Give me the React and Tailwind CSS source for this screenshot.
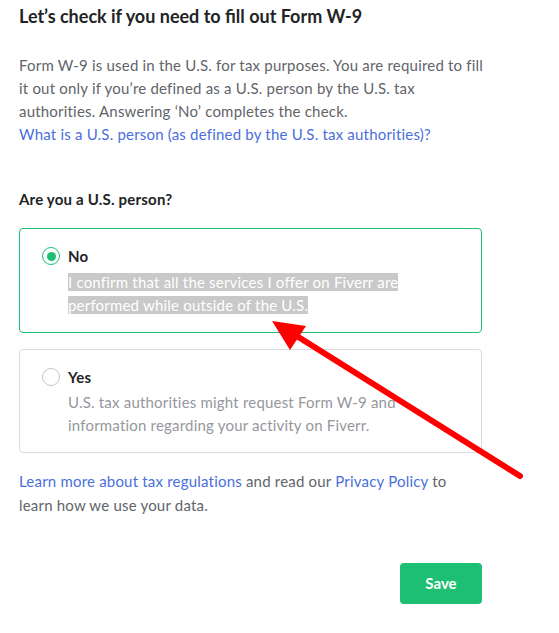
import React from 'react';

const Radio = ({ checked }) => (
  <span
    className={`flex h-[18px] w-[18px] shrink-0 items-center justify-center rounded-full border ${
      checked ? 'border-[#1dbf73]' : 'border-[#c5c6c9]'
    } bg-white`}
  >
    {checked && <span className="h-[9px] w-[9px] rounded-full bg-[#1dbf73]" />}
  </span>
);

const Option = ({ checked, label, children }) => (
  <div
    className={`rounded-[4px] border px-[22px] pt-[16px] pb-[15px] ${
      checked ? 'border-[#1dbf73]' : 'border-[#dadbdd]'
    }`}
  >
    <div className="flex items-center gap-[8px]">
      <Radio checked={checked} />
      <span className="text-[15px] font-bold tracking-[0.2px] text-[#222325]">{label}</span>
    </div>
    <div className="mt-[3px] pl-[26px] text-[15px] leading-[23px] tracking-[0.2px] text-[#95979d]">
      {children}
    </div>
  </div>
);

export default function App() {
  return (
    <div
      className="relative min-h-[633px] w-[559px] bg-white"
      style={{ fontFamily: 'Lato, "Open Sans", sans-serif' }}
    >
      <div className="w-[482px] pl-[19px] pt-[4px]">
        <h1 className="text-[18px] font-bold leading-[24px] text-[#222325]">
          Let’s check if you need to fill out Form W-9
        </h1>

        <p className="mt-[26px] whitespace-nowrap text-[15px] leading-[23px] tracking-[0.2px] text-[#62646a]">
          Form W-9 is used in the U.S. for tax purposes. You are required to fill
          <br />
          it out only if you’re defined as a U.S. person by the U.S. tax
          <br />
          authorities. Answering ‘No’ completes the check.
          <br />
          <a className="text-[#4a6fdc]">What is a U.S. person (as defined by the U.S. tax authorities)?</a>
        </p>

        <h2 className="mt-[42px] text-[15px] font-bold leading-[23px] tracking-[0.2px] text-[#222325]">
          Are you a U.S. person?
        </h2>

        <div className="mt-[17px] flex flex-col gap-[16px]">
          <Option checked label="No">
            <span className="bg-[#c9c9c9] text-white">
              I confirm that all the services I offer on Fiverr are
              <br />
              performed while outside of the U.S.
            </span>
          </Option>
          <Option label="Yes">
            U.S. tax authorities might request Form W-9 and
            <br />
            information regarding your activity on Fiverr.
          </Option>
        </div>

        <p className="mt-[16px] whitespace-nowrap text-[15px] leading-[24px] tracking-[0.2px] text-[#62646a]">
          <a className="text-[#4a6fdc]">Learn more about tax regulations</a> and read our{' '}
          <a className="text-[#4a6fdc]">Privacy Policy</a> to
          <br />
          learn how we use your data.
        </p>

        <div className="mt-[46px] flex justify-end">
          <button className="h-[41px] w-[82px] rounded-[4px] bg-[#1dbf73] text-[15px] font-bold text-white">
            Save
          </button>
        </div>
      </div>

      {/* annotation arrow */}
      <svg className="pointer-events-none absolute left-0 top-0" width="559" height="633">
        <line x1="520" y1="476" x2="292" y2="333" stroke="#ff0000" strokeWidth="6" strokeLinecap="round" />
        <polygon points="272,321 306,326 290,350" fill="#ff0000" />
      </svg>
    </div>
  );
}
